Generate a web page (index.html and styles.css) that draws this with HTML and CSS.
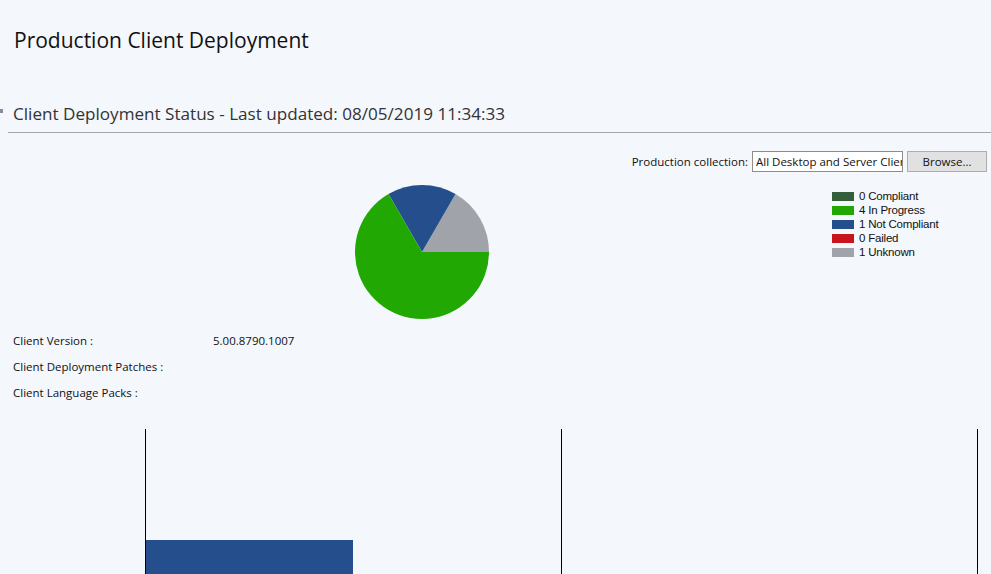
FILE: index.html
```html
<!DOCTYPE html>
<html>
<head>
<meta charset="utf-8">
<title>Production Client Deployment</title>
<link rel="stylesheet" href="styles.css">
</head>
<body>
<div class="page">
  <h1 class="title">Production Client Deployment</h1>
  <div class="section-head">
    <span class="marker"></span>
    <h2 class="section-title">Client Deployment Status - Last updated: 08/05/2019 11:34:33</h2>
  </div>
  <div class="toolbar">
    <label class="coll-label">Production collection:</label>
    <div class="coll-input">All Desktop and Server Clients</div>
    <button class="browse">Browse...</button>
  </div>
  <div class="chart-row">
    <div class="pie-wrap">
      <svg class="pie" width="136" height="136" viewBox="0 0 136 136">
        <path d="M68 68 L135 68 A67 67 0 0 0 101.5 9.98 Z" fill="#a0a3aa"/>
        <path d="M68 68 L101.5 9.98 A67 67 0 0 0 34.5 9.98 Z" fill="#244f8c"/>
        <path d="M68 68 L34.5 9.98 A67 67 0 1 0 135 68 Z" fill="#22a803"/>
      </svg>
    </div>
    <ul class="legend">
      <li><span class="sw sw-compliant"></span>0 Compliant</li>
      <li><span class="sw sw-progress"></span>4 In Progress</li>
      <li><span class="sw sw-noncompliant"></span>1 Not Compliant</li>
      <li><span class="sw sw-failed"></span>0 Failed</li>
      <li><span class="sw sw-unknown"></span>1 Unknown</li>
    </ul>
  </div>
  <div class="info">
    <div class="info-row"><span class="info-label">Client Version :</span><span class="info-value">5.00.8790.1007</span></div>
    <div class="info-row"><span class="info-label">Client Deployment Patches :</span><span class="info-value"></span></div>
    <div class="info-row"><span class="info-label">Client Language Packs :</span><span class="info-value"></span></div>
  </div>
  <div class="bars">
    <div class="col"><div class="bar" style="width:207px"></div></div>
    <div class="col"></div>
  </div>
</div>
</body>
</html>
```
FILE: styles.css
```css
* { box-sizing: border-box; }
html, body { margin: 0; padding: 0; }
body {
  background: #f4f7fc;
  font-family: "Open Sans", "Noto Sans", sans-serif;
  color: #1a1a1a;
  width: 991px;
  height: 574px;
  overflow: hidden;
}
.title {
  margin: 0;
  padding: 26px 0 0 14px;
  height: 96px;
  font-size: 21px;
  font-weight: 400;
  line-height: 28px;
  color: #111;
}
.section-head {
  display: flex;
  align-items: center;
  margin-left: 8px;
  border-bottom: 1px solid #a3a6ab;
  height: 37px;
  position: relative;
}
.marker {
  position: absolute;
  left: -8px;
  top: 13px;
  width: 3px;
  height: 4px;
  background: #8a8c90;
}
.section-title {
  margin: 0;
  padding-left: 5px;
  font-size: 17.1px;
  font-weight: 400;
  line-height: 32px;
  color: #333;
}
.toolbar {
  display: flex;
  justify-content: flex-end;
  align-items: center;
  padding: 18px 4px 0 0;
  height: 39px;
  font-size: 11.5px;
}
.coll-label {
  margin-right: 4px;
  color: #111;
}
.coll-input {
  width: 151px;
  height: 21px;
  border: 1px solid #8d8d8d;
  background: #fff;
  padding: 0 3px;
  line-height: 19px;
  white-space: nowrap;
  overflow: hidden;
  color: #111;
}
.browse {
  margin-left: 4px;
  width: 80px;
  height: 21px;
  border: 1px solid #adadad;
  background: #e1e1e1;
  font-family: inherit;
  font-size: 11.5px;
  color: #111;
  padding: 0;
}
.chart-row {
  display: flex;
  height: 155px;
}
.pie-wrap {
  padding: 12px 0 0 354px;
  width: 832px;
}
.pie { display: block; }
.legend {
  list-style: none;
  margin: 0;
  padding: 17px 0 0 0;
  font-family: "Liberation Sans", Arial, sans-serif;
  font-size: 11.5px;
  letter-spacing: -0.2px;
  color: #111;
}
.legend li {
  display: flex;
  align-items: center;
  height: 14px;
}
.sw {
  display: inline-block;
  width: 22px;
  height: 9px;
  margin-right: 5px;
}
.sw-compliant { background: #355e3b; }
.sw-progress { background: #22a803; }
.sw-noncompliant { background: #244f8c; }
.sw-failed { background: #c8141c; }
.sw-unknown { background: #a0a3aa; }
.info {
  padding: 0 0 0 13px;
  font-size: 11.5px;
  color: #111;
  height: 102px;
}
.info-row {
  display: flex;
  height: 26px;
  align-items: center;
}
.info-label { width: 200px; }
.bars {
  display: grid;
  grid-template-columns: 416px 416px;
  margin-left: 145px;
  height: 145px;
  border-right: 1px solid #000;
  width: 833px;
}
.col {
  border-left: 1px solid #000;
  display: flex;
  flex-direction: column;
  justify-content: flex-end;
}
.bar {
  height: 34px;
  background: #244f8c;
}
```
